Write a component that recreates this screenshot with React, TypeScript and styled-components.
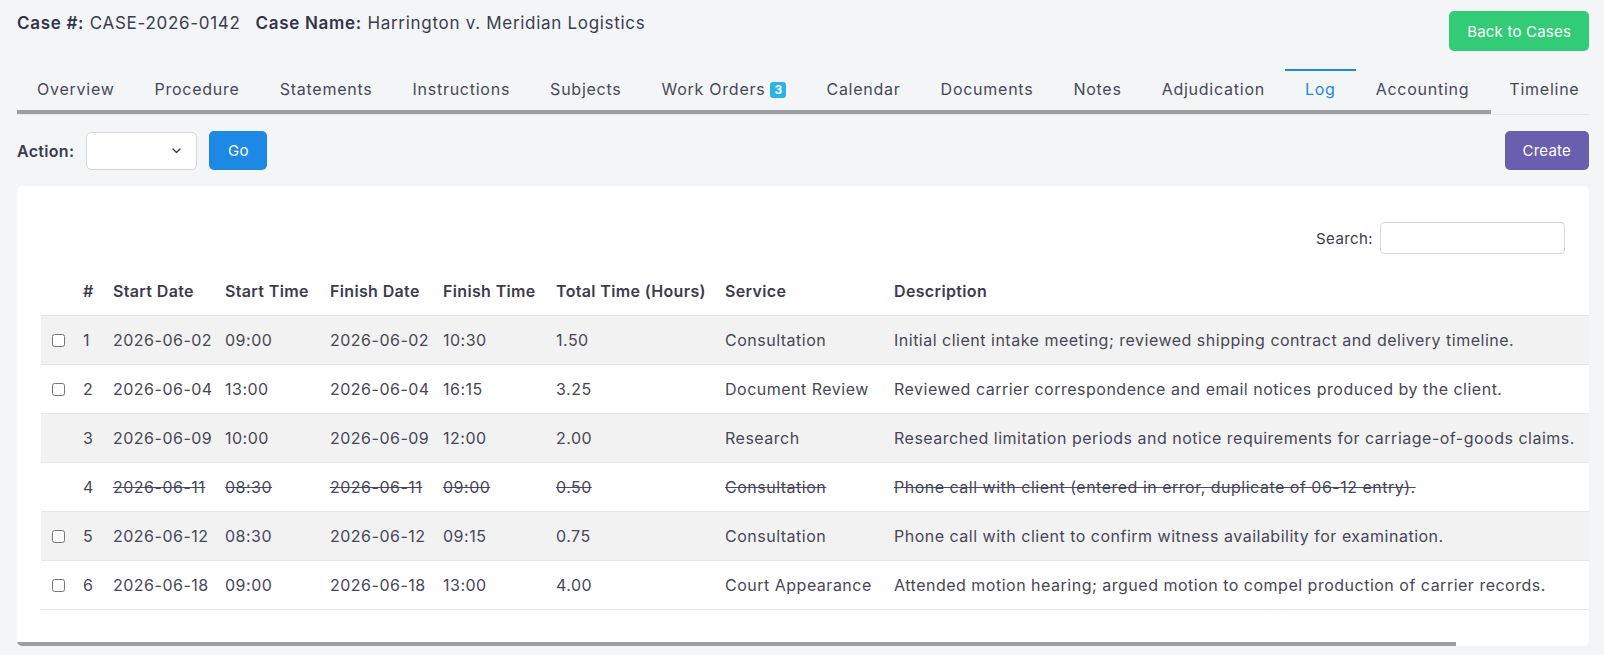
import React from "react";
import styled, { createGlobalStyle } from "styled-components";

const GlobalStyle = createGlobalStyle`
  * { box-sizing: border-box; }
  body {
    margin: 0;
    background: #f4f5f7;
    font-family: Inter, "Open Sans", sans-serif;
    color: #3b3c4e;
  }
`;

const Page = styled.div`
  padding: 11px 15px 0 17px;
`;

const HeaderRow = styled.div`
  display: flex;
  justify-content: space-between;
  align-items: flex-start;
`;

const Title = styled.h1`
  margin: 0;
  font-size: 17px;
  line-height: 24px;
  font-weight: 400;
  letter-spacing: 0.7px;
  color: #3b3c4e;
`;

const TitlePart = styled.span<{ $gap?: boolean }>`
  margin-left: ${(p) => (p.$gap ? "15px" : "0")};
`;

const Label = styled.strong`
  font-weight: 600;
  color: #33344a;
`;

const Button = styled.button<{ $bg: string; $w?: number }>`
  display: inline-flex;
  align-items: center;
  justify-content: center;
  height: ${(p) => (p.$w ? "39px" : "40px")};
  min-width: ${(p) => (p.$w ? `${p.$w}px` : "auto")};
  padding: 0 18px;
  border: none;
  border-radius: 5px;
  background: ${(p) => p.$bg};
  color: #ffffff;
  font-family: inherit;
  font-size: 15px;
  letter-spacing: 0.2px;
  cursor: pointer;
`;

/* Thin horizontal scroll indicator drawn under a clipped strip */
const ScrollTrack = styled.div`
  height: 4px;
  background: transparent;
`;

const ScrollThumb = styled.div`
  height: 100%;
  background: #9e9e9e;
`;

const TabNav = styled.nav`
  margin-top: 18px;
  border-bottom: 1px solid #e2e4e8;
`;

const TabScroller = styled.div`
  overflow: hidden;
`;

const TabList = styled.ul`
  display: flex;
  width: 1676px;
  margin: 0;
  padding: 0;
  list-style: none;
`;

const Tab = styled.li<{ $active?: boolean }>`
  display: flex;
  align-items: center;
  padding: 7px 20px 9px;
  border-top: 2px solid ${(p) => (p.$active ? "#1e88e5" : "transparent")};
  color: ${(p) => (p.$active ? "#1e88e5" : "#474859")};
  font-size: 16px;
  line-height: 23px;
  letter-spacing: 0.75px;
  white-space: nowrap;
`;

const Badge = styled.span`
  display: inline-flex;
  align-items: center;
  justify-content: center;
  width: 16px;
  height: 16px;
  margin-left: 5px;
  border-radius: 3px;
  background: #2bb3e6;
  color: #ffffff;
  font-size: 12px;
  font-weight: 700;
  letter-spacing: 0;
`;

const ActionBar = styled.div`
  display: flex;
  align-items: center;
  gap: 12px;
  margin-top: 16px;
`;

const ActionLabel = styled.span`
  font-size: 16px;
  font-weight: 600;
  letter-spacing: 0.3px;
  color: #3b3c4e;
`;

const SelectBox = styled.div`
  display: flex;
  align-items: center;
  justify-content: flex-end;
  width: 111px;
  height: 38px;
  padding-right: 15px;
  background: #ffffff;
  border: 1px solid #d3d7dd;
  border-radius: 5px;
  color: #3b3c4e;
`;

const Spacer = styled.div`
  flex: 1;
`;

const Card = styled.section`
  margin-top: 16px;
  background: #ffffff;
  border-radius: 5px;
  overflow: hidden;
`;

const CardScroller = styled.div`
  padding: 36px 24px 32px;
  overflow: hidden;
`;

const SearchRow = styled.div`
  display: flex;
  justify-content: flex-end;
  align-items: center;
  gap: 7px;
`;

const SearchLabel = styled.label`
  font-size: 15px;
  letter-spacing: 0.4px;
  color: #3b3c4e;
`;

const SearchInput = styled.input`
  width: 185px;
  height: 32px;
  border: 1px solid #d3d7dd;
  border-radius: 4px;
  background: #ffffff;
`;

const Table = styled.table`
  width: 1669px;
  margin-top: 13px;
  table-layout: fixed;
  border-collapse: separate;
  border-spacing: 0;
  font-size: 16px;
  letter-spacing: 0.5px;
`;

const Th = styled.th<{ $pad?: number }>`
  padding: 14px 10px 14px ${(p) => (p.$pad ?? 10)}px;
  line-height: 20px;
  text-align: left;
  font-weight: 600;
  letter-spacing: 0.35px;
  color: #3b3c4e;
  white-space: nowrap;
  border-bottom: 1px solid #e6e6e6;
`;

const Tr = styled.tr<{ $striped?: boolean }>`
  background: ${(p) => (p.$striped ? "#f2f2f2" : "#ffffff")};
`;

const Td = styled.td<{ $pad?: number; $void?: boolean }>`
  padding: 14px 10px 14px ${(p) => (p.$pad ?? 10)}px;
  line-height: 20px;
  color: #464757;
  white-space: nowrap;
  vertical-align: middle;
  border-bottom: 1px solid #e6e6e6;
  text-decoration: ${(p) => (p.$void ? "line-through" : "none")};
`;

const CheckCell = styled.span`
  display: flex;
  align-items: center;
  height: 20px;
`;

const Check = styled.input`
  width: 13px;
  height: 13px;
  margin: 0;
`;

const tabs = [
  "Overview",
  "Procedure",
  "Statements",
  "Instructions",
  "Subjects",
  "Work Orders",
  "Calendar",
  "Documents",
  "Notes",
  "Adjudication",
  "Log",
  "Accounting",
  "Timeline",
];

const columns = [32, 30, 112, 105, 113, 113, 169, 169, 695, 131];

type Entry = {
  id: number;
  startDate: string;
  startTime: string;
  finishDate: string;
  finishTime: string;
  total: string;
  service: string;
  description: string;
  selectable: boolean;
  voided?: boolean;
};

const entries: Entry[] = [
  {
    id: 1,
    startDate: "2026-06-02",
    startTime: "09:00",
    finishDate: "2026-06-02",
    finishTime: "10:30",
    total: "1.50",
    service: "Consultation",
    description: "Initial client intake meeting; reviewed shipping contract and delivery timeline.",
    selectable: true,
  },
  {
    id: 2,
    startDate: "2026-06-04",
    startTime: "13:00",
    finishDate: "2026-06-04",
    finishTime: "16:15",
    total: "3.25",
    service: "Document Review",
    description: "Reviewed carrier correspondence and email notices produced by the client.",
    selectable: true,
  },
  {
    id: 3,
    startDate: "2026-06-09",
    startTime: "10:00",
    finishDate: "2026-06-09",
    finishTime: "12:00",
    total: "2.00",
    service: "Research",
    description: "Researched limitation periods and notice requirements for carriage-of-goods claims.",
    selectable: false,
  },
  {
    id: 4,
    startDate: "2026-06-11",
    startTime: "08:30",
    finishDate: "2026-06-11",
    finishTime: "09:00",
    total: "0.50",
    service: "Consultation",
    description: "Phone call with client (entered in error, duplicate of 06-12 entry).",
    selectable: false,
    voided: true,
  },
  {
    id: 5,
    startDate: "2026-06-12",
    startTime: "08:30",
    finishDate: "2026-06-12",
    finishTime: "09:15",
    total: "0.75",
    service: "Consultation",
    description: "Phone call with client to confirm witness availability for examination.",
    selectable: true,
  },
  {
    id: 6,
    startDate: "2026-06-18",
    startTime: "09:00",
    finishDate: "2026-06-18",
    finishTime: "13:00",
    total: "4.00",
    service: "Court Appearance",
    description: "Attended motion hearing; argued motion to compel production of carrier records.",
    selectable: true,
  },
];

/* Measures a clipped strip and returns the thumb width for its indicator */
function useThumbWidth(ref: React.RefObject<HTMLDivElement | null>) {
  const [width, setWidth] = React.useState(0);
  React.useLayoutEffect(() => {
    const measure = () => {
      const el = ref.current;
      if (!el) return;
      const ratio = el.scrollWidth > 0 ? el.clientWidth / el.scrollWidth : 1;
      setWidth(Math.round(el.clientWidth * Math.min(1, ratio)));
    };
    measure();
    document.fonts?.ready.then(measure);
    window.addEventListener("resize", measure);
    return () => window.removeEventListener("resize", measure);
  }, [ref]);
  return width;
}

function Chevron() {
  return (
    <svg width="9" height="6" viewBox="0 0 9 6" fill="none">
      <path d="M1 1l3.5 3.5L8 1" stroke="#3b3c4e" strokeWidth="1.3" strokeLinecap="round" strokeLinejoin="round" />
    </svg>
  );
}

export default function App() {
  const tabRef = React.useRef<HTMLDivElement>(null);
  const tableRef = React.useRef<HTMLDivElement>(null);
  const tabThumb = useThumbWidth(tabRef);
  const tableThumb = useThumbWidth(tableRef);

  return (
    <Page>
      <GlobalStyle />
      <HeaderRow>
        <Title>
          <TitlePart>
            <Label>Case #:</Label> CASE-2026-0142
          </TitlePart>
          <TitlePart $gap>
            <Label>Case Name:</Label> Harrington v. Meridian Logistics
          </TitlePart>
        </Title>
        <Button $bg="#33cc76">Back to Cases</Button>
      </HeaderRow>

      <TabNav>
        <TabScroller ref={tabRef}>
          <TabList>
            {tabs.map((t) => (
              <Tab key={t} $active={t === "Log"}>
                {t}
                {t === "Work Orders" && <Badge>3</Badge>}
              </Tab>
            ))}
          </TabList>
        </TabScroller>
        <ScrollTrack>
          <ScrollThumb style={{ width: tabThumb }} />
        </ScrollTrack>
      </TabNav>

      <ActionBar>
        <ActionLabel>Action:</ActionLabel>
        <SelectBox>
          <Chevron />
        </SelectBox>
        <Button $bg="#1e88e5" $w={58}>
          Go
        </Button>
        <Spacer />
        <Button $bg="#6a5eae" $w={84}>
          Create
        </Button>
      </ActionBar>

      <Card>
        <CardScroller ref={tableRef}>
          <SearchRow>
            <SearchLabel htmlFor="log-search">Search:</SearchLabel>
            <SearchInput id="log-search" type="text" />
          </SearchRow>
          <Table>
            <colgroup>
              {columns.map((w, i) => (
                <col key={i} style={{ width: w }} />
              ))}
            </colgroup>
            <thead>
              <tr>
                <Th $pad={11} />
                <Th>#</Th>
                <Th>Start Date</Th>
                <Th>Start Time</Th>
                <Th>Finish Date</Th>
                <Th>Finish Time</Th>
                <Th>Total Time (Hours)</Th>
                <Th>Service</Th>
                <Th>Description</Th>
                <Th />
              </tr>
            </thead>
            <tbody>
              {entries.map((e, i) => (
                <Tr key={e.id} $striped={i % 2 === 0}>
                  <Td $pad={11}>
                    {e.selectable && (
                      <CheckCell>
                        <Check type="checkbox" />
                      </CheckCell>
                    )}
                  </Td>
                  <Td>{e.id}</Td>
                  <Td $void={e.voided}>{e.startDate}</Td>
                  <Td $void={e.voided}>{e.startTime}</Td>
                  <Td $void={e.voided}>{e.finishDate}</Td>
                  <Td $void={e.voided}>{e.finishTime}</Td>
                  <Td $void={e.voided}>{e.total}</Td>
                  <Td $void={e.voided}>{e.service}</Td>
                  <Td $void={e.voided}>{e.description}</Td>
                  <Td />
                </Tr>
              ))}
            </tbody>
          </Table>
        </CardScroller>
        <ScrollTrack>
          <ScrollThumb style={{ width: tableThumb }} />
        </ScrollTrack>
      </Card>
    </Page>
  );
}
